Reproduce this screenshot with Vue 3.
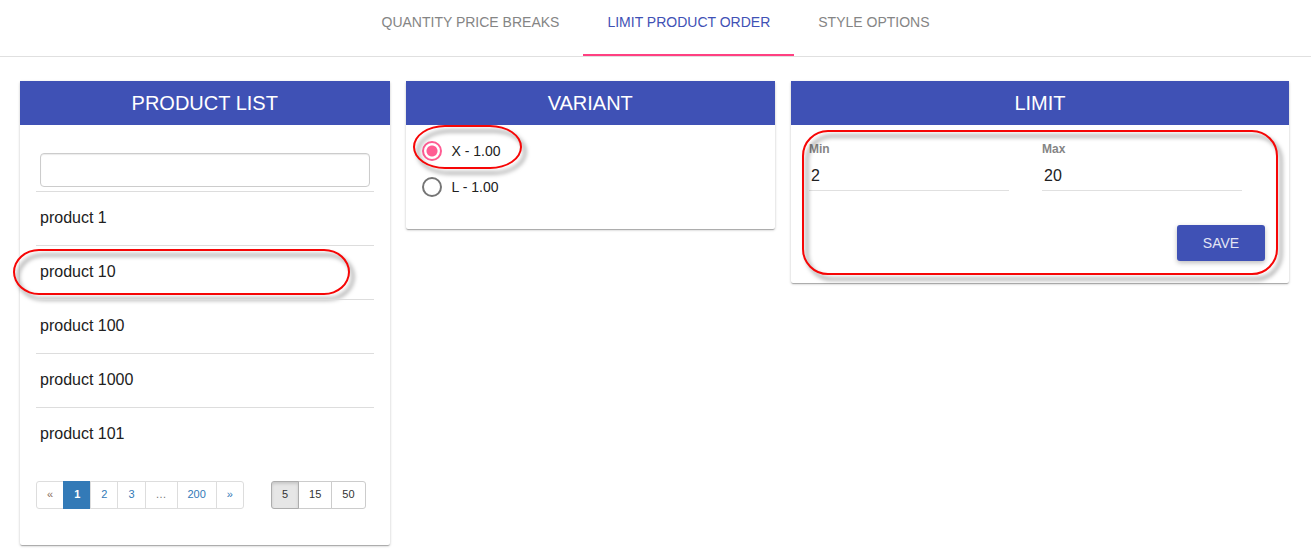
<script setup>
import { ref } from 'vue'

const tabs = ['Quantity price breaks', 'Limit product order', 'Style options']
const activeTab = ref(1)

const search = ref('')
const products = ['product 1', 'product 10', 'product 100', 'product 1000', 'product 101']
const selectedProduct = 'product 10'

const pages = ['«', '1', '2', '3', '…', '200', '»']
const page = ref('1')
const sizes = [5, 15, 50]
const size = ref(5)

const variants = ['X - 1.00', 'L - 1.00']
const variant = ref('X - 1.00')

const min = ref('2')
const max = ref('20')
</script>

<template>
  <div class="page">
    <nav class="tabs">
      <button
        v-for="(tab, i) in tabs"
        :key="tab"
        type="button"
        class="tab"
        :class="{ active: i === activeTab }"
        @click="activeTab = i"
      >{{ tab }}</button>
    </nav>

    <main class="columns">
      <div class="column">
        <section class="card">
          <h2 class="card-title">PRODUCT LIST</h2>
          <div class="card-body list-body">
            <table class="products">
              <thead>
                <tr>
                  <th><input v-model="search" class="search" type="text" aria-label="Search products"></th>
                </tr>
              </thead>
              <tbody>
                <tr v-for="p in products" :key="p">
                  <td>
                    {{ p }}
                    <span v-if="p === selectedProduct" class="callout callout-row"></span>
                  </td>
                </tr>
              </tbody>
            </table>
            <div class="pager">
              <div class="group">
                <button
                  v-for="p in pages"
                  :key="p"
                  type="button"
                  class="page-btn"
                  :class="{ current: p === page, muted: p === '…', prev: p === '«' }"
                >{{ p }}</button>
              </div>
              <div class="group">
                <button
                  v-for="s in sizes"
                  :key="s"
                  type="button"
                  class="size-btn"
                  :class="{ pressed: s === size }"
                  @click="size = s"
                >{{ s }}</button>
              </div>
            </div>
          </div>
        </section>
      </div>

      <div class="column">
        <section class="card">
          <h2 class="card-title">VARIANT</h2>
          <div class="card-body variant-body">
            <label v-for="v in variants" :key="v" class="option">
              <input v-model="variant" class="radio" type="radio" name="variant" :value="v">
              <span>{{ v }}</span>
            </label>
            <span class="callout callout-option"></span>
          </div>
        </section>
      </div>

      <div class="column wide">
        <section class="card">
          <h2 class="card-title">LIMIT</h2>
          <div class="card-body limit-body">
            <div class="fields">
              <div class="field">
                <label for="min">Min</label>
                <input id="min" v-model="min" type="text">
              </div>
              <div class="field">
                <label for="max">Max</label>
                <input id="max" v-model="max" type="text">
              </div>
            </div>
            <div class="actions">
              <button type="button" class="save">SAVE</button>
            </div>
            <span class="callout callout-form"></span>
          </div>
        </section>
      </div>
    </main>
  </div>
</template>

<style>
body {
  background: #fff;
}
</style>

<style scoped>
.page,
.page * {
  box-sizing: border-box;
}

.page {
  font-family: "Liberation Sans", Arial, sans-serif;
  font-size: 16px;
  color: #212121;
}

button,
input {
  font-family: inherit;
  margin: 0;
}

.tabs {
  display: flex;
  justify-content: center;
  border-bottom: 1px solid #e0e0e0;
}

.tab {
  height: 56px;
  padding: 0 24px 10px;
  border: 0;
  border-bottom: 2px solid transparent;
  background: none;
  font-size: 14px;
  line-height: 20px;
  text-transform: uppercase;
  color: #858585;
}

.tab.active {
  color: #3f51b5;
  border-bottom-color: #ff4081;
}

.columns {
  display: flex;
  align-items: flex-start;
  padding: 16px 14px 0 12px;
}

.column {
  width: 30%;
  padding: 8px;
}

.column.wide {
  width: 40%;
}

.card {
  border-radius: 2px;
  background: #fff;
  box-shadow: 0 1px 3px rgba(0, 0, 0, 0.2), 0 1px 1px rgba(0, 0, 0, 0.14), 0 2px 1px -1px rgba(0, 0, 0, 0.12);
}

.card-title {
  margin: 0;
  background: #3f51b5;
  color: #fff;
  font-size: 20px;
  font-weight: 400;
  line-height: 44px;
  text-align: center;
}

.card-body {
  position: relative;
}

.list-body {
  padding: 24px 16px 36px;
}

.products {
  width: 100%;
  border-collapse: separate;
  border-spacing: 0;
}

.products th {
  padding: 4px;
  font-weight: 400;
}

.products td {
  position: relative;
  height: 54px;
  padding: 0 4px 2px;
  border-top: 1px solid #ddd;
}

.search {
  display: block;
  width: 100%;
  height: 34px;
  padding: 6px 12px;
  border: 1px solid #ccc;
  border-radius: 4px;
  box-shadow: inset 0 1px 1px rgba(0, 0, 0, 0.08);
  font-size: 14px;
}

.pager {
  display: flex;
  gap: 27px;
  margin-top: 20px;
}

.group {
  display: flex;
}

.group button {
  height: 28px;
  margin-left: -1px;
  padding: 0 10px 2px;
  border: 1px solid #ddd;
  background: #fff;
  font-size: 11px;
  line-height: 24px;
}

.group button:first-child {
  margin-left: 0;
  border-radius: 3px 0 0 3px;
}

.group button:last-child {
  border-radius: 0 3px 3px 0;
}

.group .page-btn {
  min-width: 28px;
  color: #337ab7;
}

.group .page-btn.prev {
  color: #8a6d5b;
}

.group .page-btn.muted {
  color: #777;
}

.group .page-btn.current {
  border-color: #337ab7;
  background: #337ab7;
  color: #fff;
  font-weight: 700;
}

.group .size-btn {
  border-color: #ccc;
  color: #333;
}

.group .size-btn.pressed {
  position: relative;
  border-color: #adadad;
  background: #e6e6e6;
  box-shadow: inset 0 2px 3px rgba(0, 0, 0, 0.13);
}

.variant-body {
  display: flex;
  flex-direction: column;
  align-items: flex-start;
  gap: 16px;
  padding: 16px 16px 32px;
}

.option {
  display: flex;
  align-items: center;
  gap: 10px;
  height: 20px;
  font-size: 14px;
}

.radio {
  appearance: none;
  width: 20px;
  height: 20px;
  border: 2px solid #757575;
  border-radius: 50%;
}

.radio:checked {
  border-color: #ff5c93;
  background: radial-gradient(circle, #ff5c93 0 5px, transparent 6px);
}

.limit-body {
  padding: 16px 24px 22px 18px;
}

.fields {
  display: flex;
  gap: 33px;
  padding-right: 23px;
}

.field {
  flex: 1;
  min-width: 0;
}

.field label {
  display: block;
  color: #858585;
  font-size: 12px;
  font-weight: 700;
  line-height: 16px;
}

.field input {
  display: block;
  width: 100%;
  height: 30px;
  margin-top: 4px;
  padding: 2px 2px 1px;
  border: 0;
  border-bottom: 1px solid #e0e0e0;
  border-radius: 0;
  background: none;
  color: #212121;
  font-size: 16px;
  margin-bottom: 34px;
}

.actions {
  display: flex;
  justify-content: flex-end;
}

.save {
  width: 88px;
  height: 36px;
  border: 0;
  border-radius: 3px;
  background: #3f51b5;
  box-shadow: 0 2px 5px rgba(0, 0, 0, 0.26);
  color: #e3e5f4;
  font-size: 14px;
}

.callout {
  position: absolute;
  border: 2px solid #f60606;
  filter: drop-shadow(4px 5px 2px rgba(0, 0, 0, 0.5));
  pointer-events: none;
}

.callout-row {
  top: 3px;
  right: 24px;
  bottom: 4px;
  left: -23px;
  border-radius: 26px / 23px;
}

.callout-option {
  top: 0;
  left: 7px;
  width: 109px;
  height: 44px;
  border-radius: 32px / 22px;
}

.callout-form {
  top: 5px;
  right: 11px;
  bottom: 8px;
  left: 11px;
  border-radius: 26px;
}
</style>
